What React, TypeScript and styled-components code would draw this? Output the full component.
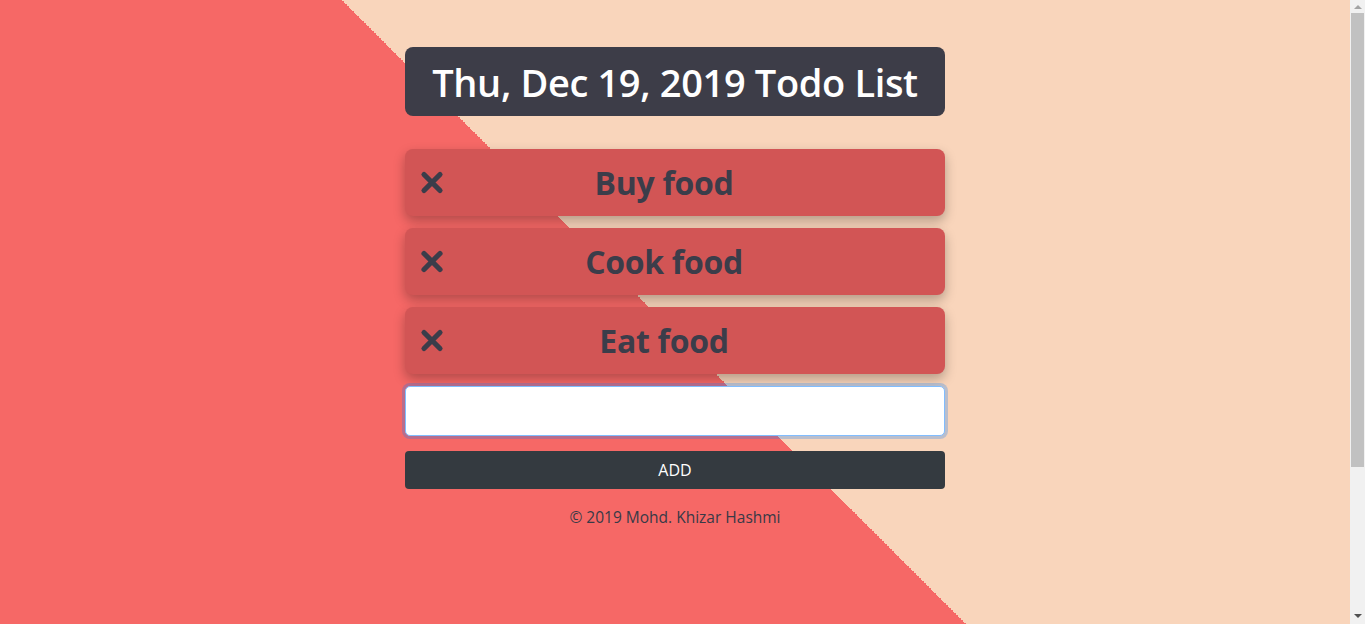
import React from "react";
import styled, { createGlobalStyle } from "styled-components";

const GlobalStyle = createGlobalStyle`
  html, body { margin: 0; padding: 0; }
  body {
    font-family: "Open Sans", "Noto Sans", sans-serif;
    color: #3b3d4a;
  }
  * { box-sizing: border-box; }
`;

const Shell = styled.div`
  display: flex;
  min-height: 100vh;
`;

const Page = styled.div`
  flex: 1;
  min-height: 100vh;
  background: linear-gradient(45deg, #f66866 50%, #f9d5bb 50%) 342px 0 / 3000px 3000px no-repeat, #f66866;
  display: flex;
  justify-content: center;
  padding-top: 47px;
`;

const ScrollTrack = styled.div`
  position: sticky;
  top: 0;
  align-self: flex-start;
  width: 15px;
  height: 100vh;
  background: #f1f1f1;
  display: flex;
  flex-direction: column;
  align-items: center;
`;

const ScrollArrow = styled.div<{ $down?: boolean }>`
  width: 0;
  height: 0;
  margin: ${(p) => (p.$down ? "auto 0 6px" : "5px 0 0")};
  border-left: 4px solid transparent;
  border-right: 4px solid transparent;
  ${(p) =>
    p.$down ? "border-top: 4px solid #505050;" : "border-bottom: 4px solid #a3a3a3;"}
`;

const ScrollThumb = styled.div`
  width: 13px;
  height: 454px;
  margin-top: 4px;
  background: #c1c1c1;
`;

const Column = styled.div`
  width: 540px;
  display: flex;
  flex-direction: column;
`;

const Header = styled.h1`
  margin: 0 0 33px;
  height: 69px;
  background: #3d3d48;
  border-radius: 8px;
  color: #fff;
  font-size: 38px;
  font-weight: 600;
  display: flex;
  align-items: center;
  justify-content: center;
  padding-top: 1px;
  letter-spacing: -0.35px;
`;

const List = styled.ul`
  list-style: none;
  margin: 0;
  padding: 0;
  display: flex;
  flex-direction: column;
  gap: 12px;
`;

const Item = styled.li`
  height: 67px;
  background: #d25555;
  border-radius: 8px;
  box-shadow: 0 5px 12px rgba(0, 0, 0, 0.28);
  display: flex;
  align-items: center;
  padding-left: 15px;
`;

const RemoveButton = styled.button`
  border: 0;
  background: none;
  padding: 0;
  width: 24px;
  height: 25px;
  display: flex;
  align-items: center;
  justify-content: center;
  cursor: pointer;
  color: #3b3d4a;
`;

const ItemText = styled.span`
  flex: 1;
  text-align: center;
  padding-right: 61px;
  font-size: 32px;
  font-weight: 700;
  color: #3b3d4a;
  letter-spacing: -0.3px;
`;

const Input = styled.input`
  margin-top: 12px;
  height: 50px;
  width: 100%;
  border: 1px solid #80bdff;
  border-radius: 5px;
  background: #fff;
  box-shadow: 0 0 0 3px rgba(0, 123, 255, 0.25);
  outline: none;
  font-size: 20px;
  padding: 0 16px;
`;

const AddButton = styled.button`
  margin-top: 15px;
  height: 38px;
  width: 100%;
  border: 0;
  border-radius: 4px;
  background: #343a40;
  color: #fff;
  font-family: "Open Sans", "Noto Sans", sans-serif;
  font-size: 16px;
  cursor: pointer;
`;

const Footer = styled.p`
  margin: 17px 0 0;
  text-align: center;
  font-size: 15.5px;
  color: #383a47;
`;

const XIcon = () => (
  <svg width="24" height="25" viewBox="0 0 24 25" aria-hidden="true">
    <path
      d="M4 4.5 L20 20.5 M20 4.5 L4 20.5"
      stroke="currentColor"
      strokeWidth="5.2"
      strokeLinecap="round"
      fill="none"
    />
  </svg>
);

const todos = ["Buy food", "Cook food", "Eat food"];

export default function App() {
  return (
    <>
      <GlobalStyle />
      <Shell>
        <Page>
          <Column>
            <Header>Thu, Dec 19, 2019 Todo List</Header>
            <List>
              {todos.map((t) => (
                <Item key={t}>
                  <RemoveButton aria-label={`Remove ${t}`}>
                    <XIcon />
                  </RemoveButton>
                  <ItemText>{t}</ItemText>
                </Item>
              ))}
            </List>
            <Input type="text" />
            <AddButton>ADD</AddButton>
            <Footer>© 2019 Mohd. Khizar Hashmi</Footer>
          </Column>
        </Page>
        <ScrollTrack aria-hidden="true">
          <ScrollArrow />
          <ScrollThumb />
          <ScrollArrow $down />
        </ScrollTrack>
      </Shell>
    </>
  );
}
